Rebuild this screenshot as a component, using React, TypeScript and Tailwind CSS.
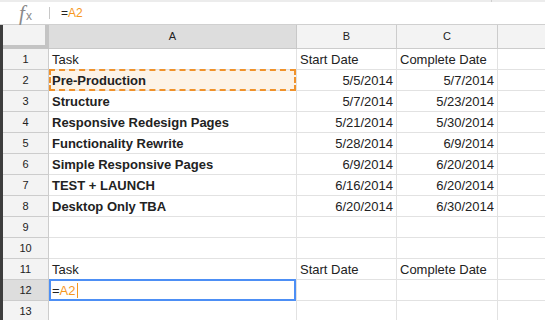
import React from 'react';

type Row = { n: number; task?: string; start?: string; end?: string; bold?: boolean };

const rows: Row[] = [
  { n: 1, task: 'Task', start: 'Start Date', end: 'Complete Date' },
  { n: 2, task: 'Pre-Production', start: '5/5/2014', end: '5/7/2014', bold: true },
  { n: 3, task: 'Structure', start: '5/7/2014', end: '5/23/2014', bold: true },
  { n: 4, task: 'Responsive Redesign Pages', start: '5/21/2014', end: '5/30/2014', bold: true },
  { n: 5, task: 'Functionality Rewrite', start: '5/28/2014', end: '6/9/2014', bold: true },
  { n: 6, task: 'Simple Responsive Pages', start: '6/9/2014', end: '6/20/2014', bold: true },
  { n: 7, task: 'TEST + LAUNCH', start: '6/16/2014', end: '6/20/2014', bold: true },
  { n: 8, task: 'Desktop Only TBA', start: '6/20/2014', end: '6/30/2014', bold: true },
  { n: 9 },
  { n: 10 },
  { n: 11, task: 'Task', start: 'Start Date', end: 'Complete Date' },
  { n: 12 },
  { n: 13 },
];

const App = () => {
  return (
    <div
      className="w-[545px] h-[320px] overflow-hidden bg-white text-[#222]"
      style={{ fontFamily: '"Liberation Sans", Arial, sans-serif' }}
    >
      {/* formula bar */}
      <div className="h-[2px] bg-[#ececec] flex">
        <div className="w-[491px]" />
        <div className="w-px bg-[#cfcfcf]" />
      </div>
      <div className="h-[23px] flex items-center border-b border-[#d0d0d0]">
        <div className="w-[49px] flex items-center justify-center pl-[2px]">
          <span className="italic text-[#8a8a8a] text-[21px] leading-none" style={{ fontFamily: '"Liberation Serif", serif' }}>f</span>
          <span className="text-[#8a8a8a] text-[12px] leading-none mt-[6px] ml-[1px]">x</span>
        </div>
        <div className="w-px h-[12px] bg-[#c8c8c8]" />
        <div className="pl-[11px] text-[12px] leading-none">
          =<span className="text-[#f7981d]">A2</span>
        </div>
      </div>

      <div className="flex">
        <div className="w-[3px] bg-[#3d3d3d] self-stretch shrink-0" />
        <div className="flex-1">
          {/* column headers */}
          <div className="flex h-[24px] text-[11px]">
            <div className="w-[46px] shrink-0 bg-[#f3f3f3] border-r-[4px] border-b-[4px] border-[#c4c4c4]" />
            <div className="w-[248px] shrink-0 bg-[#dddddd] border-r border-b border-[#c8c8c8] flex items-center justify-center">A</div>
            <div className="w-[100px] shrink-0 bg-[#f3f3f3] border-r border-b border-[#cccccc] flex items-center justify-center">B</div>
            <div className="w-[101px] shrink-0 bg-[#f3f3f3] border-r border-b border-[#cccccc] flex items-center justify-center">C</div>
            <div className="flex-1 bg-[#f3f3f3] border-b border-[#cccccc]" />
          </div>

          {rows.map((r) => (
            <div key={r.n} className="flex h-[21px] text-[13px]">
              <div
                className={`w-[46px] shrink-0 border-r border-b border-[#cccccc] flex items-center justify-center text-[11px] ${
                  r.n === 12 ? 'bg-[#dddddd]' : 'bg-[#f3f3f3]'
                }`}
              >
                {r.n}
              </div>
              <div
                className={`relative w-[248px] shrink-0 border-r border-b border-[#e2e2e2] flex items-center px-[3px] pt-[1px] ${
                  r.bold ? 'font-bold' : ''
                } ${r.n === 2 ? 'bg-[#fdf3e7]' : ''}`}
              >
                {r.task}
                {r.n === 2 && (
                  <div className="absolute -top-[1px] left-0 right-0 -bottom-[1px] border-2 border-dashed border-[#f0922b]" />
                )}
                {r.n === 12 && (
                  <>
                    <span>
                      =<span className="text-[#f7981d]">A2</span>
                    </span>
                    <span className="w-px h-[15px] bg-[#f7981d] ml-px" />
                    <div className="absolute -top-[1px] left-0 right-0 -bottom-[1px] border-2 border-[#4d8ff5]" />
                  </>
                )}
              </div>
              <div className={`w-[100px] shrink-0 border-r border-b border-[#e2e2e2] flex items-center px-[3px] pt-[1px] ${r.n === 1 || r.n === 11 ? 'justify-start' : 'justify-end'}`}>
                {r.start}
              </div>
              <div className={`w-[101px] shrink-0 border-r border-b border-[#e2e2e2] flex items-center px-[3px] pt-[1px] ${r.n === 1 || r.n === 11 ? 'justify-start' : 'justify-end'}`}>
                {r.end}
              </div>
              <div className="flex-1 border-b border-[#e2e2e2]" />
            </div>
          ))}
        </div>
      </div>
    </div>
  );
};

export default App;
